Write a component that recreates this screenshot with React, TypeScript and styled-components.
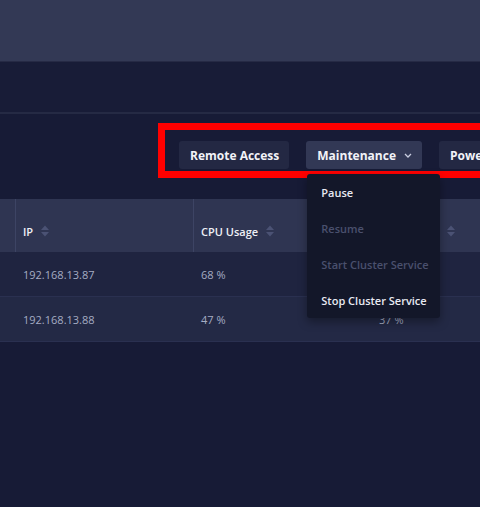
import React from 'react'
import styled, { createGlobalStyle } from 'styled-components'

const GlobalStyle = createGlobalStyle`
  html, body {
    margin: 0;
    padding: 0;
    background: #171b36;
    overflow: hidden;
  }

  body {
    font-family: "Open Sans", "Noto Sans", sans-serif;
    color: #e6e8f0;
  }
`

const Page = styled.div`
  width: 480px;
  height: 507px;
  overflow: hidden;
  background: #171b36;
`

const TopBar = styled.div`
  height: 61px;
  background: #333955;
  border-bottom: 1px solid #262a45;
`

const SubBar = styled.div`
  height: 50px;
  background: #181c37;
  border-bottom: 2px solid #252a44;
`

const Toolbar = styled.div`
  display: flex;
  padding: 27px 0 30px 179px;
  background: #171b36;
`

const ButtonGroup = styled.div`
  position: relative;
  display: flex;
  gap: 17px;
`

const Highlight = styled.div`
  position: absolute;
  left: -21px;
  top: -18px;
  width: 340px;
  height: 41px;
  border: 7px solid #ff0000;
  pointer-events: none;
`

const ButtonWrap = styled.div`
  position: relative;
`

const ActionButton = styled.button<{ $active?: boolean }>`
  display: flex;
  align-items: center;
  gap: 8px;
  height: 28px;
  padding: 0 10px 0 11px;
  border: none;
  border-radius: 3px;
  background: ${p => (p.$active ? '#323855' : '#232843')};
  color: #f2f3f8;
  font-family: "Open Sans", "Noto Sans", sans-serif;
  font-size: 12px;
  font-weight: 700;
  white-space: nowrap;
  cursor: pointer;
`

const Menu = styled.div`
  position: absolute;
  top: calc(100% + 5px);
  left: 1px;
  width: 133px;
  background: #131729;
  border-radius: 3px;
  box-shadow: 0 4px 10px rgba(0, 0, 0, 0.35);
  z-index: 5;
`

const MenuItem = styled.div<{ $disabled?: boolean }>`
  height: 36px;
  display: flex;
  align-items: center;
  padding: 0 14px;
  font-size: 11px;
  font-weight: 600;
  white-space: nowrap;
  color: ${p => (p.$disabled ? '#4a506d' : '#e8eaf2')};
`

const Table = styled.div`
  display: grid;
  grid-template-columns: 16px 178px 178px 1fr;
`

const HeadCell = styled.div<{ $last?: boolean }>`
  display: flex;
  align-items: center;
  gap: 8px;
  height: 53px;
  padding: 11px 7px 0 7px;
  box-sizing: border-box;
  background: #2f3552;
  border-right: ${p => (p.$last ? 'none' : '1px solid #3d4464')};
  font-size: 11px;
  font-weight: 600;
  color: #eef0f6;
  white-space: nowrap;
`

const Cell = styled.div<{ $alt?: boolean }>`
  display: flex;
  align-items: center;
  height: 44px;
  padding: 0 7px;
  background: ${p => (p.$alt ? '#232945' : '#1f2440')};
  border-bottom: 1px solid #2a3050;
  font-size: 11px;
  color: #a5acc3;
  white-space: nowrap;
`

const SortIcon = () => (
  <svg width="8" height="12" viewBox="0 0 8 12">
    <polygon points="0,5 4,0.5 8,5" fill="#4b5274" />
    <polygon points="0,7 4,11.5 8,7" fill="#4b5274" />
  </svg>
)

const Chevron = () => (
  <svg width="8" height="5" viewBox="0 0 8 5">
    <path d="M1 1 L4 4 L7 1" stroke="#c9cde0" strokeWidth="1.3" fill="none" />
  </svg>
)

const rows = [
  { ip: '192.168.13.87', cpu: '68 %', ram: '52 %' },
  { ip: '192.168.13.88', cpu: '47 %', ram: '37 %' },
]

const App: React.FC = () => {
  return (
    <Page>
      <GlobalStyle />
      <TopBar />
      <SubBar />
      <Toolbar>
        <ButtonGroup>
          <Highlight />
          <ActionButton>Remote Access</ActionButton>
          <ButtonWrap>
            <ActionButton $active>
              Maintenance <Chevron />
            </ActionButton>
            <Menu>
              <MenuItem>Pause</MenuItem>
              <MenuItem $disabled>Resume</MenuItem>
              <MenuItem $disabled>Start Cluster Service</MenuItem>
              <MenuItem>Stop Cluster Service</MenuItem>
            </Menu>
          </ButtonWrap>
          <ActionButton>
            Power <Chevron />
          </ActionButton>
        </ButtonGroup>
      </Toolbar>
      <Table>
        <HeadCell />
        <HeadCell>IP <SortIcon /></HeadCell>
        <HeadCell>CPU Usage <SortIcon /></HeadCell>
        <HeadCell $last>RAM Usage <SortIcon /></HeadCell>
        {rows.map((row, i) => (
          <React.Fragment key={row.ip}>
            <Cell $alt={i % 2 === 1} />
            <Cell $alt={i % 2 === 1}>{row.ip}</Cell>
            <Cell $alt={i % 2 === 1}>{row.cpu}</Cell>
            <Cell $alt={i % 2 === 1}>{row.ram}</Cell>
          </React.Fragment>
        ))}
      </Table>
    </Page>
  )
}

export default App
